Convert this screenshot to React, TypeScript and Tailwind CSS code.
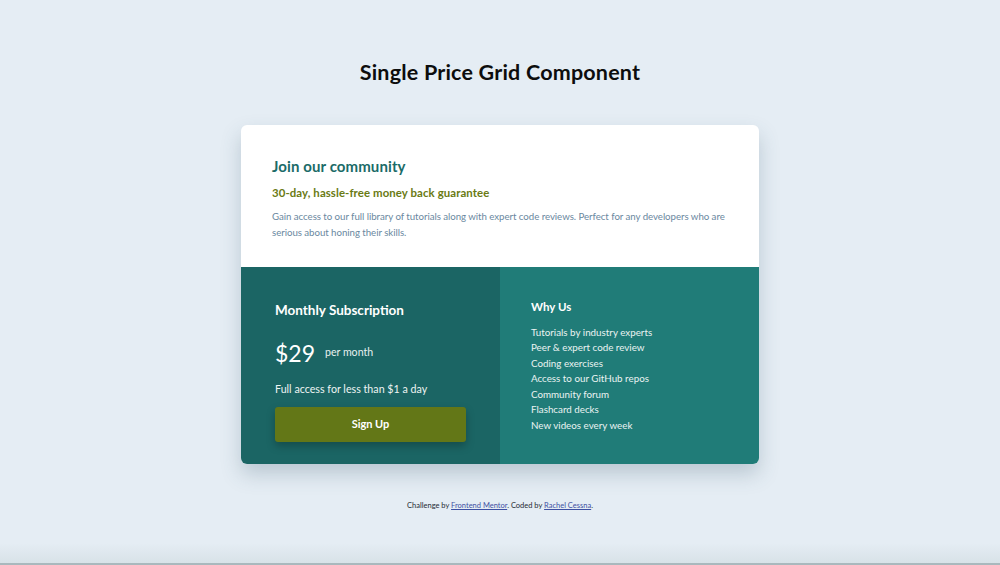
const features = [
  "Tutorials by industry experts",
  "Peer & expert code review",
  "Coding exercises",
  "Access to our GitHub repos",
  "Community forum",
  "Flashcard decks",
  "New videos every week",
];

export default function App() {
  return (
    <div className="flex min-h-screen flex-col items-center bg-[#e5edf4] font-['Lato','Open_Sans',sans-serif]">
      <h1 className="mt-[56px] text-[21.5px] font-bold tracking-[0.2px] text-[#0d0d0d]">
        Single Price Grid Component
      </h1>

      <main className="mt-[37px] w-[518px] overflow-hidden rounded-[6px] bg-white shadow-[0_10px_20px_rgba(60,90,110,0.25)]">
        <section className="h-[142px] px-[31px] pt-[30px]">
          <h2 className="text-[15px] font-bold tracking-[0.1px] text-[#1b6b68]">Join our community</h2>
          <p className="mt-[6px] text-[11.4px] font-bold tracking-[0.1px] text-[#6a7a13]">
            30-day, hassle-free money back guarantee
          </p>
          <p className="mt-[7px] text-[9.7px] leading-[16px] tracking-[-0.05px] text-[#6a88a0]">
            Gain access to our full library of tutorials along with expert code reviews. Perfect for any developers who are serious about honing their skills.
          </p>
        </section>

        <div className="grid grid-cols-2 text-white">
          <section className="h-[197px] bg-[#1b6564] px-[34px] pt-[33px]">
            <h3 className="text-[13.5px] font-bold">Monthly Subscription</h3>
            <div className="mt-[15px] flex items-center gap-[10px]">
              <span className="text-[23px]">$29</span>
              <span className="text-[10.6px] text-[#e8f0ef]">per month</span>
            </div>
            <p className="mt-[11px] text-[10.7px] text-[#eef4f3]">Full access for less than $1 a day</p>
            <button className="mt-[10px] h-[35px] w-[191px] rounded-[3px] bg-[#637717] text-[11px] font-bold shadow-[0_4px_8px_rgba(0,0,0,0.25)]">
              Sign Up
            </button>
          </section>

          <section className="bg-[#207c78] px-[31px] pt-[31px]">
            <h3 className="text-[11.5px] font-bold">Why Us</h3>
            <ul className="mt-[9px] text-[9.8px] leading-[15.5px] text-[#eaf3f2]">
              {features.map((f) => (
                <li key={f}>{f}</li>
              ))}
            </ul>
          </section>
        </div>
      </main>

      <p className="mt-[36px] text-[7.5px] text-[#1e2a33]">
        Challenge by{" "}
        <a href="#" className="text-[#3d50a3] underline">Frontend Mentor</a>. Coded by{" "}
        <a href="#" className="text-[#3d50a3] underline">Rachel Cessna</a>.
      </p>

      <div className="mt-auto h-[20px] w-full bg-gradient-to-b from-[#e5edf4] to-[#d8e2e8]" />
      <div className="h-[2px] w-full bg-[#a9b8bd]" />
    </div>
  );
}
